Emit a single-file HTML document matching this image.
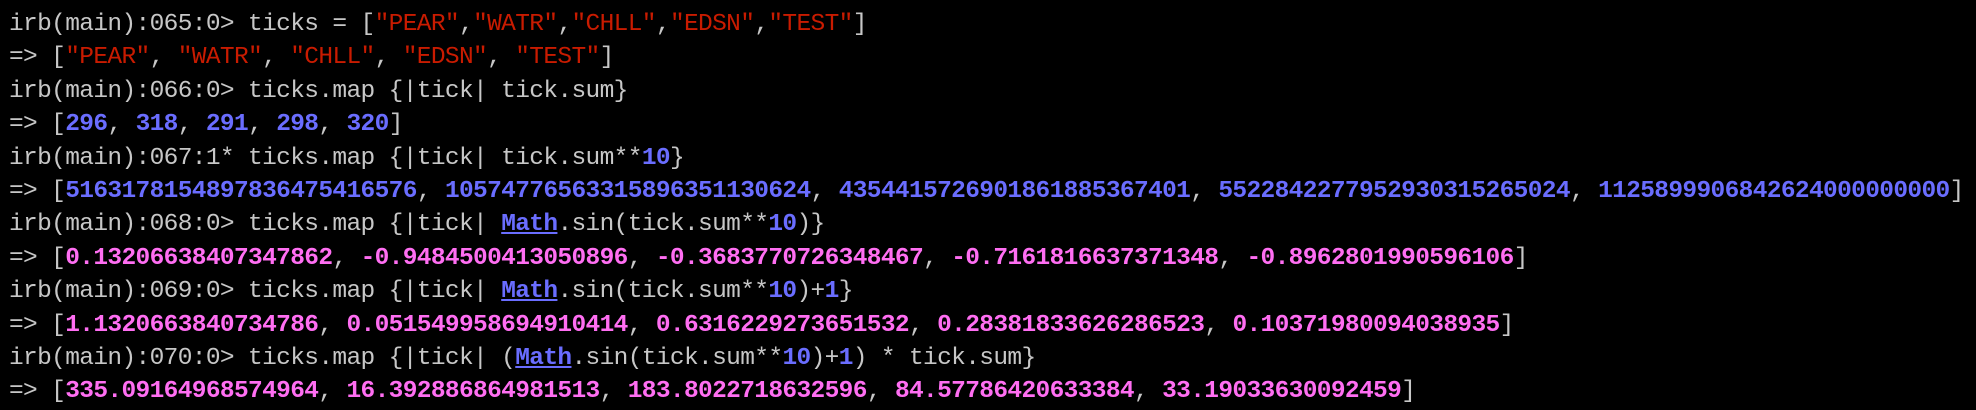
<!DOCTYPE html>
<html><head><meta charset="utf-8"><style>
html,body{margin:0;padding:0;background:#000;}
body{width:1976px;height:410px;overflow:hidden;}
pre{margin:0;padding:8px 0 0 9px;font-family:"Liberation Mono","DejaVu Sans Mono",monospace;font-size:24.5px;letter-spacing:-0.64px;line-height:33.4px;color:#c7c7c7;white-space:pre;}
.r{color:#c91b00;}
.b{color:#6a6dff;font-weight:bold;}
.m{color:#ff6ef2;font-weight:bold;}
.u{color:#6a6dff;font-weight:bold;text-decoration:underline;}
</style></head><body><pre>irb(main):065:0&gt; ticks = [<span class="r">"PEAR"</span>,<span class="r">"WATR"</span>,<span class="r">"CHLL"</span>,<span class="r">"EDSN"</span>,<span class="r">"TEST"</span>]
=&gt; [<span class="r">"PEAR"</span>, <span class="r">"WATR"</span>, <span class="r">"CHLL"</span>, <span class="r">"EDSN"</span>, <span class="r">"TEST"</span>]
irb(main):066:0&gt; ticks.map {|tick| tick.sum}
=&gt; [<span class="b">296</span>, <span class="b">318</span>, <span class="b">291</span>, <span class="b">298</span>, <span class="b">320</span>]
irb(main):067:1* ticks.map {|tick| tick.sum**<span class="b">10</span>}
=&gt; [<span class="b">5163178154897836475416576</span>, <span class="b">10574776563315896351130624</span>, <span class="b">4354415726901861885367401</span>, <span class="b">5522842277952930315265024</span>, <span class="b">1125899906842624000000000</span>]
irb(main):068:0&gt; ticks.map {|tick| <span class="u">Math</span>.sin(tick.sum**<span class="b">10</span>)}
=&gt; [<span class="m">0.13206638407347862</span>, <span class="m">-0.9484500413050896</span>, <span class="m">-0.3683770726348467</span>, <span class="m">-0.7161816637371348</span>, <span class="m">-0.8962801990596106</span>]
irb(main):069:0&gt; ticks.map {|tick| <span class="u">Math</span>.sin(tick.sum**<span class="b">10</span>)+<span class="b">1</span>}
=&gt; [<span class="m">1.1320663840734786</span>, <span class="m">0.051549958694910414</span>, <span class="m">0.6316229273651532</span>, <span class="m">0.28381833626286523</span>, <span class="m">0.10371980094038935</span>]
irb(main):070:0&gt; ticks.map {|tick| (<span class="u">Math</span>.sin(tick.sum**<span class="b">10</span>)+<span class="b">1</span>) * tick.sum}
=&gt; [<span class="m">335.09164968574964</span>, <span class="m">16.392886864981513</span>, <span class="m">183.8022718632596</span>, <span class="m">84.57786420633384</span>, <span class="m">33.19033630092459</span>]</pre></body></html>
